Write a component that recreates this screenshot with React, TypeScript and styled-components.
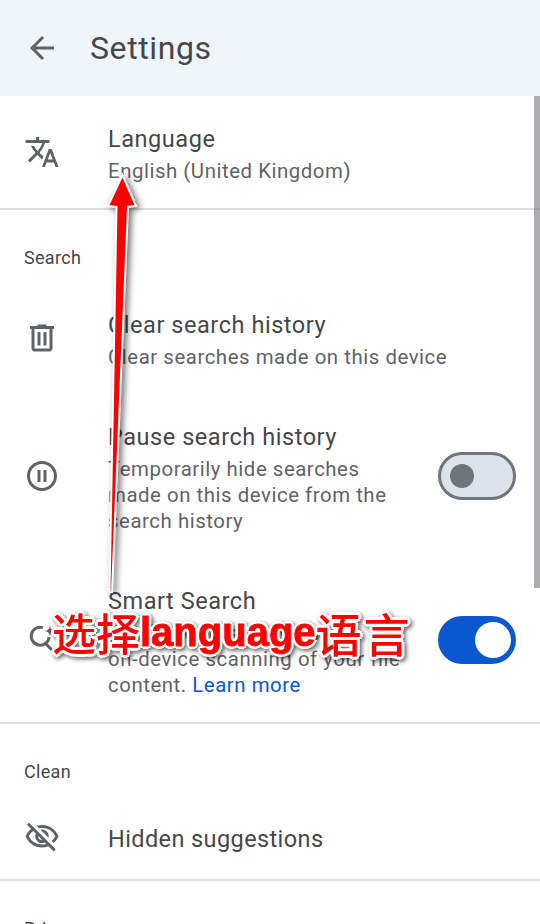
import React from 'react';
import styled, { createGlobalStyle } from 'styled-components';
import { MdArrowBack, MdOutlinePauseCircle, MdOutlineVisibilityOff, MdTranslate } from 'react-icons/md';

const GlobalStyle = createGlobalStyle`
  html, body {
    margin: 0;
    padding: 0;
    background: #fff;
  }
  body {
    font-family: Roboto, "Liberation Sans", sans-serif;
  }
`;

const Page = styled.div`
  position: relative;
  width: 540px;
  height: 924px;
  overflow: hidden;
  background: #fff;
`;

const Header = styled.header`
  height: 96px;
  display: flex;
  align-items: center;
  gap: 30px;
  padding-left: 24px;
  background: #f0f4fb;
  svg { font-size: 36px; color: #5f6368; }
`;

const Title = styled.h1`
  margin: 0;
  font-size: 32px;
  font-weight: 400;
  letter-spacing: 0.6px;
  color: #44474b;
`;

const Section = styled.section<{ $divided?: boolean; $pad: string }>`
  padding: ${(p) => p.$pad};
  border-bottom: ${(p) => (p.$divided ? '2px solid #e0e0e0' : 'none')};
`;

const SectionLabel = styled.h2`
  margin: 0;
  padding-left: 24px;
  font-size: 18px;
  line-height: 24px;
  font-weight: 400;
  letter-spacing: 0.3px;
  color: #44474b;
`;

const Row = styled.div<{ $top?: number }>`
  display: grid;
  grid-template-columns: 108px 1fr 102px;
  align-items: center;
  padding-top: ${(p) => p.$top ?? 0}px;
`;

const IconSlot = styled.div`
  padding: 0 0 3px 24px;
  color: #5f6368;
  font-size: 36px;
  line-height: 0;
`;

const RowText = styled.div`
  max-width: 302px;
`;

const RowTitle = styled.div<{ $tight?: boolean }>`
  font-size: 23.5px;
  line-height: 32px;
  letter-spacing: ${(p) => (p.$tight ? '0.4px' : '0.55px')};
  white-space: nowrap;
  color: #44474b;
`;

const RowSub = styled.div`
  font-size: 20.4px;
  line-height: 26px;
  letter-spacing: 0.54px;
  color: #5f6368;
  margin-top: 3px;
`;

const SingleLine = styled.div`
  white-space: nowrap;
`;

const LearnMore = styled.a`
  color: #0b57d0;
  text-decoration: none;
`;

const Toggle = styled.div<{ $on?: boolean }>`
  box-sizing: border-box;
  width: 78px;
  height: 48px;
  margin-bottom: 4px;
  border-radius: 24px;
  display: flex;
  align-items: center;
  justify-content: ${(p) => (p.$on ? 'flex-end' : 'flex-start')};
  padding: 0 ${(p) => (p.$on ? '5px' : '9px')};
  background: ${(p) => (p.$on ? '#0b57d0' : '#dde3ea')};
  border: ${(p) => (p.$on ? 'none' : '3px solid #70757a')};
`;

const Knob = styled.span<{ $on?: boolean }>`
  display: block;
  width: ${(p) => (p.$on ? '36px' : '24px')};
  height: ${(p) => (p.$on ? '36px' : '24px')};
  border-radius: 50%;
  background: ${(p) => (p.$on ? '#fff' : '#70757a')};
`;

const Scrollbar = styled.div`
  position: absolute;
  top: 96px;
  right: 0;
  width: 6px;
  height: 492px;
  background: rgba(90, 92, 100, 0.5);
`;

const ArrowLayer = styled.svg`
  position: absolute;
  inset: 0;
  width: 540px;
  height: 924px;
  pointer-events: none;
  filter: drop-shadow(3px 2px 3px rgba(0, 0, 0, 0.55));
`;

const Caption = styled.div`
  position: absolute;
  left: 52px;
  top: 604px;
  display: flex;
  align-items: center;
  height: 56px;
  white-space: nowrap;
  color: #ff0000;
  font-family: "Liberation Sans", "Noto Sans CJK SC", sans-serif;
  font-weight: 700;
  font-size: 40px;
  -webkit-text-stroke: 0.8px #ff0000;
  text-shadow:
    3px 0 0 #fff, -3px 0 0 #fff, 0 3px 0 #fff, 0 -3px 0 #fff,
    2px 2px 0 #fff, -2px 2px 0 #fff, 2px -2px 0 #fff, -2px -2px 0 #fff;
  filter: drop-shadow(2px 2px 2px rgba(0, 0, 0, 0.6));
`;

const CaptionCjk = styled.span<{ $w: number; $size: number }>`
  font-family: "Noto Sans CJK SC", sans-serif;
  font-size: ${(p) => p.$size}px;
  font-weight: 500;
  letter-spacing: ${(p) => p.$w}px;
  -webkit-text-stroke: 0;
`;

const TrashIcon = () => (
  <svg width="36" height="36" viewBox="0 0 24 24" fill="currentColor">
    <path d="M7 21q-.825 0-1.413-.587Q5 19.825 5 19V6H4V4h5V3h6v1h5v2h-1v13q0 .825-.587 1.413Q17.825 21 17 21ZM17 6H7v13h10ZM9 17h2V8H9Zm4 0h2V8h-2Z" />
  </svg>
);

const SmartIcon = () => (
  <svg width="36" height="36" viewBox="0 0 36 36" fill="none">
    <path d="M19 5.600a9 9 0 1 0 6.200 9.400" stroke="currentColor" strokeWidth="3" />
    <path d="M21 21l7.500 7.500" stroke="currentColor" strokeWidth="3" />
    <path d="M26 3.500c.6 3.600 1.900 4.900 5.500 5.500-3.600.6-4.900 1.900-5.500 5.500-.6-3.600-1.900-4.900-5.500-5.500 3.600-.6 4.900-1.900 5.500-5.500z" fill="currentColor" />
  </svg>
);

export default function App() {
  return (
    <Page>
      <GlobalStyle />
      <Header>
        <MdArrowBack />
        <Title>Settings</Title>
      </Header>

      <Section $divided $pad="27px 0 24px">
        <Row>
          <IconSlot><MdTranslate /></IconSlot>
          <RowText>
            <RowTitle>Language</RowTitle>
            <RowSub>English (United Kingdom)</RowSub>
          </RowText>
        </Row>
      </Section>

      <Section $divided $pad="36px 0 24px">
        <SectionLabel>Search</SectionLabel>
        <Row $top={39}>
          <IconSlot><TrashIcon /></IconSlot>
          <RowText>
            <RowTitle>Clear search history</RowTitle>
            <RowSub><SingleLine>Clear searches made on this device</SingleLine></RowSub>
          </RowText>
        </Row>
        <Row $top={51}>
          <IconSlot><MdOutlinePauseCircle /></IconSlot>
          <RowText>
            <RowTitle>Pause search history</RowTitle>
            <RowSub>Temporarily hide searches made on this device from the search history</RowSub>
          </RowText>
          <Toggle><Knob /></Toggle>
        </Row>
        <Row $top={51}>
          <IconSlot><SmartIcon /></IconSlot>
          <RowText>
            <RowTitle>Smart Search</RowTitle>
            <RowSub>
              Get faster results with<br />
              on-device scanning of your file<br />
              content. <LearnMore>Learn more</LearnMore>
            </RowSub>
          </RowText>
          <Toggle $on><Knob $on /></Toggle>
        </Row>
      </Section>

      <Section $divided $pad="36px 0 21px">
        <SectionLabel>Clean</SectionLabel>
        <Row $top={35}>
          <IconSlot><MdOutlineVisibilityOff /></IconSlot>
          <RowTitle $tight>Hidden suggestions</RowTitle>
        </Row>
      </Section>

      <Section $pad="36px 0 0">
        <SectionLabel>Privacy</SectionLabel>
      </Section>

      <Scrollbar />

      <ArrowLayer viewBox="0 0 540 924">
        <polygon
          points="122.500,175 136,206 128,207 112,592 109.500,592 116.500,207 108,206"
          fill="#ff0000"
          stroke="#fff"
          strokeWidth="2"
          strokeLinejoin="miter"
        />
      </ArrowLayer>

      <Caption>
        <CaptionCjk $w={0} $size={44}>选择</CaptionCjk>
        language
        <CaptionCjk $w={2} $size={46}>语言</CaptionCjk>
      </Caption>
    </Page>
  );
}
